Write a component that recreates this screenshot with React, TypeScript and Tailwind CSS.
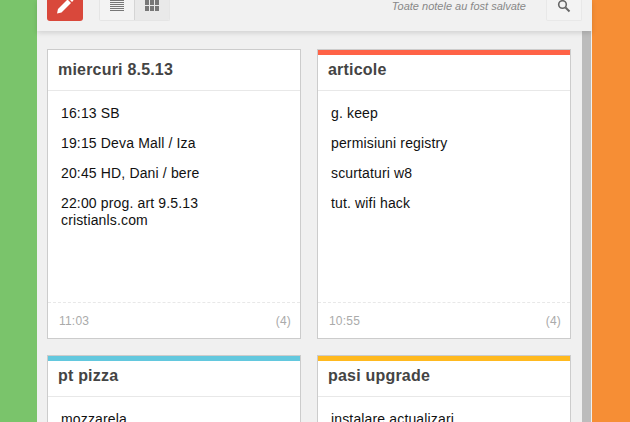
const notes = [
  {
    title: 'miercuri 8.5.13',
    bar: '',
    items: ['16:13 SB', '19:15 Deva Mall / Iza', '20:45 HD, Dani / bere', '22:00 prog. art 9.5.13\ncristianls.com'],
    time: '11:03',
    count: '(4)',
  },
  {
    title: 'articole',
    bar: 'bg-[#ff6347]',
    items: ['g. keep', 'permisiuni registry', 'scurtaturi w8', 'tut. wifi hack'],
    time: '10:55',
    count: '(4)',
  },
  { title: 'pt pizza', bar: 'bg-[#63c8de]', items: ['mozzarela', 'sunca'], time: '', count: '' },
  { title: 'pasi upgrade', bar: 'bg-[#ffb91f]', items: ['instalare actualizari', 'backup'], time: '', count: '' },
];

function Note({ note }: { note: (typeof notes)[number] }) {
  return (
    <div className="flex h-[290px] flex-col border border-[#cccccc] bg-white">
      {note.bar ? <div className={`h-[5px] shrink-0 ${note.bar}`} /> : null}
      <div
        className={`flex shrink-0 items-center border-b border-[#e8e8e8] pl-[10px] text-[16px] font-bold tracking-[0.2px] text-[#444444] ${
          note.bar ? 'h-[36px] pb-[5px]' : 'h-[41px]'
        }`}
      >
        {note.title}
      </div>
      <div className="flex flex-1 flex-col gap-[13px] pt-[14px] pl-[13px] text-[14px] leading-[17px] tracking-[0.15px] text-[#111111]">
        {note.items.map((item) => (
          <div key={item} className="whitespace-pre-line">
            {item}
          </div>
        ))}
      </div>
      <div className="flex h-[36px] shrink-0 items-center justify-between border-t border-dashed border-[#e8e8e8] pr-[9px] pl-[11px] text-[12px] tracking-[0.2px] text-[#aaaaaa]">
        <span>{note.time}</span>
        <span>{note.count}</span>
      </div>
    </div>
  );
}

export default function App() {
  return (
    <div className="flex h-[422px] w-[630px] overflow-hidden font-['Liberation_Sans',Arial,sans-serif]">
      <div className="w-[37px] shrink-0 bg-[#7ac46b]" />

      <div className="flex w-[555px] shrink-0 flex-col bg-[#f0f0f0]">
        {/* Toolbar */}
        <div className="relative z-10 flex h-[31px] shrink-0 items-start bg-[#f1f1f1] pl-[10px] shadow-[0_2px_5px_rgba(0,0,0,0.13)]">
          <div className="flex h-[21px] w-[36px] items-center justify-center overflow-hidden rounded-b-[3px] bg-[#d9483b]">
            <svg width="20" height="20" viewBox="0 0 20 20" className="-mt-[9px]">
              <path d="M2 17.5 L3 13 L12.5 3.5 L16 7 L6.5 16.5 Z" fill="#ffffff" />
              <path d="M13.5 2.5 L15 1 L18.5 4.5 L17 6 Z" fill="#ffffff" />
            </svg>
          </div>

          <div className="ml-[16px] flex h-[21px] overflow-hidden rounded-b-[2px] border-r border-b border-l border-[#e5e5e5]">
            <div className="flex w-[35px] justify-center border-r border-[#d5d5d5] bg-[#f3f3f3]">
              <div className="flex h-[11px] w-[14px] flex-col justify-between">
                {[0, 1, 2, 3, 4, 5].map((i) => (
                  <div key={i} className="h-px bg-[#777777]" />
                ))}
              </div>
            </div>
            <div className="flex w-[34px] justify-center bg-[#e9e9e9]">
              <div className="grid h-[11px] w-[14px] grid-cols-3 grid-rows-2 gap-px">
                {[0, 1, 2, 3, 4, 5].map((i) => (
                  <div key={i} className="bg-[#777777]" />
                ))}
              </div>
            </div>
          </div>

          <div className="ml-auto flex items-start">
            <span className="mt-[-1px] text-[11px] leading-[14px] text-[#888888] italic">
              Toate notele au fost salvate
            </span>
            <div className="mr-[10px] ml-[20px] flex h-[21px] w-[36px] items-start justify-center rounded-b-[2px] border-r border-b border-l border-[#e8e8e8] bg-[#f3f3f3]">
              <svg width="14" height="14" viewBox="0 0 14 14" className="-mt-[1px]">
                <circle cx="5.5" cy="5.5" r="3.8" fill="none" stroke="#666666" strokeWidth="1.6" />
                <path d="M8.5 8.5 L12.5 12.5" stroke="#666666" strokeWidth="2" />
              </svg>
            </div>
          </div>
        </div>

        {/* Notes */}
        <div className="flex min-h-0 flex-1">
          <div className="grid w-[545px] grid-cols-[254px_254px] content-start gap-x-[16px] gap-y-[16px] pt-[18px] pl-[10px]">
            {notes.map((note) => (
              <Note key={note.title} note={note} />
            ))}
          </div>
          <div className="h-full w-[9px] bg-[#bcbcbc]" />
        </div>
      </div>

      <div className="flex-1 bg-[#f68e35]" />
    </div>
  );
}
